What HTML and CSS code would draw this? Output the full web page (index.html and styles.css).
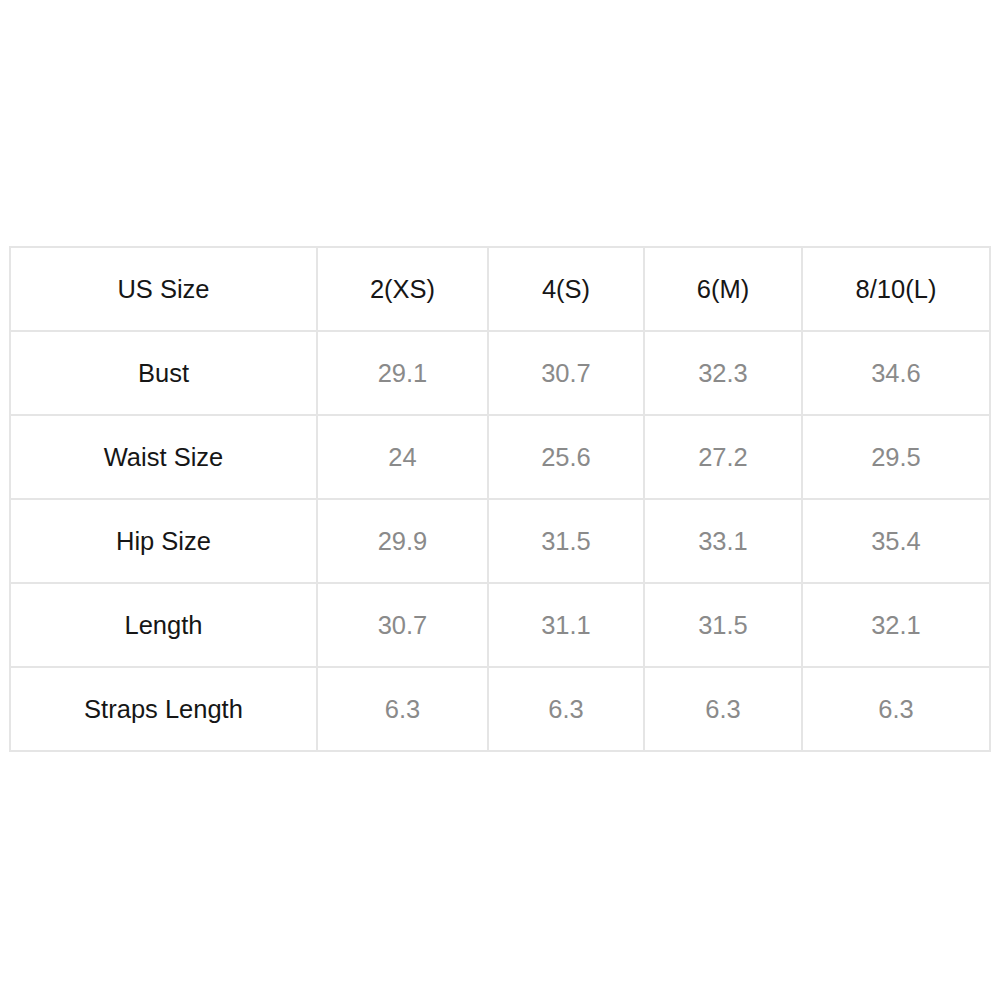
FILE: index.html
```html
<!DOCTYPE html>
<html>
<head>
<meta charset="utf-8">
<link rel="stylesheet" href="styles.css">
</head>
<body>
<table class="size-table">
  <colgroup>
    <col class="c1"><col class="c2"><col class="c3"><col class="c4"><col class="c5">
  </colgroup>
  <tr class="head"><td class="label">US Size</td><td>2(XS)</td><td>4(S)</td><td>6(M)</td><td>8/10(L)</td></tr>
  <tr><td class="label">Bust</td><td>29.1</td><td>30.7</td><td>32.3</td><td>34.6</td></tr>
  <tr><td class="label">Waist Size</td><td>24</td><td>25.6</td><td>27.2</td><td>29.5</td></tr>
  <tr><td class="label">Hip Size</td><td>29.9</td><td>31.5</td><td>33.1</td><td>35.4</td></tr>
  <tr><td class="label">Length</td><td>30.7</td><td>31.1</td><td>31.5</td><td>32.1</td></tr>
  <tr><td class="label">Straps Length</td><td>6.3</td><td>6.3</td><td>6.3</td><td>6.3</td></tr>
</table>
</body>
</html>
```
FILE: styles.css
```css
html, body {
  margin: 0;
  padding: 0;
  background: #fff;
}
body {
  font-family: "Liberation Sans", Arial, sans-serif;
}
.size-table {
  border-collapse: collapse;
  table-layout: fixed;
  width: 982px;
  margin: 246px 0 0 9px;
  font-size: 25.5px;
}
.c1 { width: 307px; }
.c2 { width: 171px; }
.c3 { width: 156px; }
.c4 { width: 158px; }
.c5 { width: 188px; }
.size-table td {
  border: 2px solid #e5e5e5;
  height: 82px;
  padding: 0;
  text-align: center;
  vertical-align: middle;
  color: #8a8a8a;
}
.size-table td.label,
.size-table tr.head td {
  color: #161616;
}
```
